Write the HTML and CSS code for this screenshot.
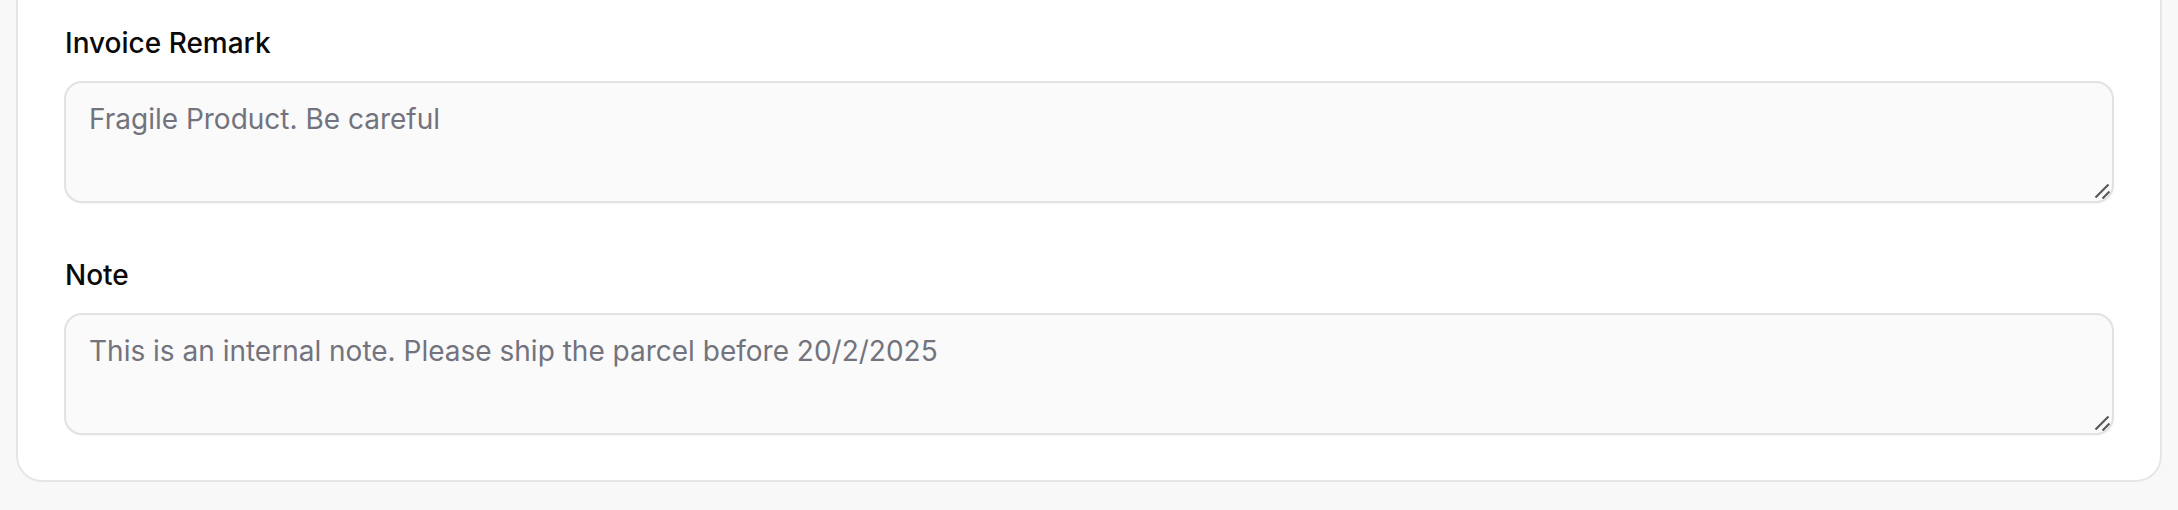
FILE: index.html
```html
<!DOCTYPE html>
<html lang="en">
<head>
<meta charset="utf-8">
<title>Invoice Remark</title>
<link rel="stylesheet" href="styles.css">
</head>
<body>
<div class="card">
  <div class="field">
    <label class="label" for="remark">Invoice Remark</label>
    <div class="ta-wrap">
      <textarea id="remark" class="ta" placeholder="Fragile Product. Be careful"></textarea>
      <svg class="grip" width="16" height="16" viewBox="0 0 16 16"><path d="M1.5 14.5 L14.5 1.5 M8.5 15.5 L15.5 8.5" stroke="#5a5a5a" stroke-width="2.2" stroke-linecap="butt"/></svg>
    </div>
  </div>
  <div class="field">
    <label class="label" for="note">Note</label>
    <div class="ta-wrap">
      <textarea id="note" class="ta" placeholder="This is an internal note. Please ship the parcel before 20/2/2025"></textarea>
      <svg class="grip" width="16" height="16" viewBox="0 0 16 16"><path d="M1.5 14.5 L14.5 1.5 M8.5 15.5 L15.5 8.5" stroke="#5a5a5a" stroke-width="2.2" stroke-linecap="butt"/></svg>
    </div>
  </div>
</div>
</body>
</html>
```
FILE: styles.css
```css
html, body {
  margin: 0;
  padding: 0;
  background: #f8f8f8;
  font-family: Inter, "Noto Sans", sans-serif;
}
.card {
  margin: 0 16px;
  background: #ffffff;
  border: 2px solid #e6e6e6;
  border-top: 0;
  border-radius: 0 0 26px 26px;
  padding: 23px 46px 45px;
  display: flex;
  flex-direction: column;
  gap: 52px;
}
.field {
  display: flex;
  flex-direction: column;
  gap: 18px;
}
.label {
  font-size: 28px;
  line-height: 40px;
  font-weight: 500;
  color: #0a0a0a;
  padding-left: 1px;
}
.ta-wrap {
  position: relative;
  height: 122px;
}
.ta {
  box-sizing: border-box;
  width: 100%;
  height: 122px;
  display: block;
  margin: 0;
  resize: none;
  background: #fafafa;
  border: 2px solid #e2e2e2;
  border-radius: 18px;
  box-shadow: 0 1px 2px rgba(0,0,0,0.04);
  padding: 16px 23px;
  font-family: Inter, "Noto Sans", sans-serif;
  font-size: 28px;
  line-height: 40px;
  color: #111;
  outline: none;
}
.ta::placeholder {
  color: #73737d;
  opacity: 1;
}
.grip {
  position: absolute;
  right: 4px;
  bottom: 4px;
}
```
